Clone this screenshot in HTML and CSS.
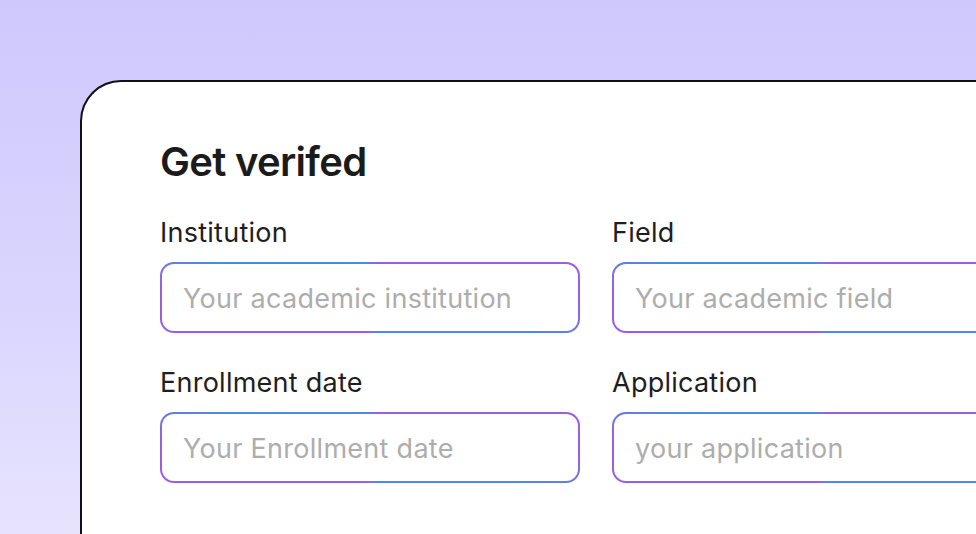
FILE: index.html
```html
<!DOCTYPE html>
<html lang="en">
<head>
<meta charset="utf-8">
<title>Get verifed</title>
<link rel="stylesheet" href="styles.css">
</head>
<body>
<div class="stage">
  <div class="card">
    <h1 class="title">Get verifed</h1>
    <div class="grid">
      <div class="field">
        <div class="label">Institution</div>
        <div class="input"><span class="placeholder">Your academic institution</span></div>
      </div>
      <div class="field">
        <div class="label">Field</div>
        <div class="input"><span class="placeholder">Your academic field</span></div>
      </div>
      <div class="field">
        <div class="label">Enrollment date</div>
        <div class="input"><span class="placeholder">Your Enrollment date</span></div>
      </div>
      <div class="field">
        <div class="label">Application</div>
        <div class="input"><span class="placeholder">your application</span></div>
      </div>
    </div>
  </div>
</div>
</body>
</html>
```
FILE: styles.css
```css
html, body {
  margin: 0;
  padding: 0;
}
body {
  width: 976px;
  height: 534px;
  overflow: hidden;
  background: linear-gradient(180deg, #cfc8fd 0%, #dbd6fe 60%, #e7e3fe 100%);
  font-family: Inter, "Noto Sans", sans-serif;
}
.stage {
  width: 976px;
  height: 534px;
  box-sizing: border-box;
  padding: 80px 0 0 80px;
  overflow: hidden;
}
.card {
  width: 896px;
  height: 454px;
  box-sizing: border-box;
  overflow: hidden;
  background: #ffffff;
  border: 2px solid #111111;
  border-right: 0;
  border-bottom: 0;
  border-radius: 41px 0 0 0;
  padding: 56px 0 0 78px;
}
.title {
  margin: 0;
  font-size: 40px;
  line-height: 48px;
  font-weight: 600;
  color: #1b1b1b;
  letter-spacing: -0.7px;
}
.grid {
  margin-top: 31px;
  display: grid;
  grid-template-columns: 420px 420px;
  column-gap: 32px;
  row-gap: 34px;
}
.field {
  display: flex;
  flex-direction: column;
  gap: 13px;
}
.label {
  font-size: 27px;
  line-height: 32px;
  color: #1e1e1e;
  letter-spacing: 0.25px;
}
.input {
  height: 71px;
  box-sizing: border-box;
  display: flex;
  align-items: center;
  padding: 3px 21px 0;
  border: 2px solid transparent;
  border-radius: 14px;
  background:
    linear-gradient(#ffffff, #ffffff) padding-box,
    conic-gradient(from 0deg,
      #7c72e6 0deg,
      #9c5de4 12deg,
      #9c5de4 92deg,
      #4b8ae6 103deg,
      #4b8ae6 170deg,
      #7c72e6 180deg,
      #9c5de4 192deg,
      #9c5de4 272deg,
      #4b8ae6 283deg,
      #4b8ae6 350deg,
      #7c72e6 360deg) border-box;
}
.placeholder {
  font-size: 27px;
  line-height: 32px;
  color: #adadad;
  letter-spacing: 0.28px;
  white-space: nowrap;
}
```
